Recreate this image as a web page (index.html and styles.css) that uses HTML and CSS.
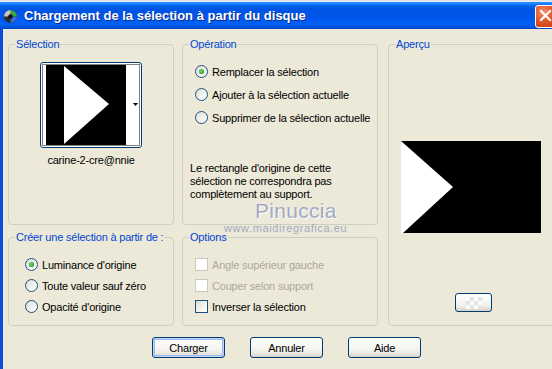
FILE: index.html
```html
<!DOCTYPE html>
<html lang="fr">
<head>
  <meta charset="UTF-8">
  <title>Chargement de la sélection à partir du disque</title>
  <link rel="stylesheet" href="styles.css">
</head>
<body>
  <div id="window">
    <div class="titlebar">
      <svg class="app-icon" width="15" height="15" viewBox="0 0 15 15">
        <circle cx="7.5" cy="7.5" r="6.5" fill="#2b2b2b"/>
        <path d="M7.5 1 A6.5 6.5 0 0 1 14 7.5 L7.5 7.5 Z" fill="#3aa83a"/>
        <path d="M7.5 7.5 L14 7.5 A6.5 6.5 0 0 1 7.5 14 Z" fill="#2f6fd6"/>
        <path d="M1 7.5 A6.5 6.5 0 0 1 7.5 1 L7.5 7.5 Z" fill="#c8c8c8"/>
        <circle cx="7.5" cy="7.5" r="2.3" fill="#111"/>
      </svg>
      <span class="title">Chargement de la sélection à partir du disque</span>
      <span class="close-btn">
        <svg width="21" height="21" viewBox="0 0 21 21">
          <path d="M6 6 L15 15 M15 6 L6 15" stroke="#fff" stroke-width="2.2" stroke-linecap="square"/>
        </svg>
      </span>
    </div>

    <div class="content">
      <div class="groups">
        <fieldset class="group">
          <legend>Sélection</legend>
          <div class="sel-body">
            <div class="thumb">
              <svg width="102" height="86" viewBox="0 0 102 86">
                <rect x="6" y="3" width="80" height="80" fill="#000"/>
                <polygon points="24,4 69,42 24,82" fill="#fff"/>
                <rect x="86" y="3" width="13" height="80" fill="#fff"/>
                <polygon points="93,41 98,41 95.5,44" fill="#000"/>
                <rect x="2.5" y="2.5" width="97" height="81" fill="none" stroke="#000" stroke-width="1" stroke-dasharray="1 1"/>
              </svg>
            </div>
            <div class="thumb-name">carine-2-cre@nnie</div>
          </div>
        </fieldset>

        <fieldset class="group">
          <legend>Opération</legend>
          <div class="op-body">
            <div class="choices op-choices">
              <label class="choice"><span class="radio checked"></span>Remplacer la sélection</label>
              <label class="choice"><span class="radio"></span>Ajouter à la sélection actuelle</label>
              <label class="choice"><span class="radio"></span>Supprimer de la sélection actuelle</label>
            </div>
            <p class="note">Le rectangle d'origine de cette<br>sélection ne correspondra pas<br>complètement au support.</p>
          </div>
        </fieldset>

        <fieldset class="group preview-group">
          <legend>Aperçu</legend>
          <div class="preview-body">
            <svg class="preview" width="140" height="92" viewBox="0 0 140 92">
              <rect width="140" height="92" fill="#000"/>
              <polygon points="0,0 52,46 2,92 0,92" fill="#fff"/>
            </svg>
            <span class="zoom-btn"><span class="checker"></span></span>
          </div>
        </fieldset>

        <fieldset class="group">
          <legend>Créer une sélection à partir de :</legend>
          <div class="choices src-choices">
            <label class="choice"><span class="radio checked"></span>Luminance d'origine</label>
            <label class="choice"><span class="radio"></span>Toute valeur sauf zéro</label>
            <label class="choice"><span class="radio"></span>Opacité d'origine</label>
          </div>
        </fieldset>

        <fieldset class="group">
          <legend>Options</legend>
          <div class="choices opt-choices">
            <label class="choice disabled"><span class="check"></span>Angle supérieur gauche</label>
            <label class="choice disabled"><span class="check"></span>Couper selon support</label>
            <label class="choice"><span class="check"></span>Inverser la sélection</label>
          </div>
        </fieldset>
      </div>

      <div class="actions">
        <button class="btn default">Charger</button>
        <button class="btn">Annuler</button>
        <button class="btn">Aide</button>
      </div>

      <div class="watermark">
        <span class="wm-name">Pinuccia</span>
        <span class="wm-url">www.maidiregrafica.eu</span>
      </div>
    </div>
  </div>
</body>
</html>
```

FILE: styles.css
```css
html, body {
  margin: 0;
  padding: 0;
  width: 552px;
  height: 369px;
  overflow: hidden;
  background-color: #ECE9D8;
  font-family: "Liberation Sans", Arial, sans-serif;
  font-size: 11px;
  color: #000;
}

#window {
  display: flex;
  flex-direction: column;
  height: 100%;
}

.titlebar {
  display: flex;
  align-items: center;
  height: 27px;
  border-top: 2px solid #e3e5ea;
  padding-left: 3px;
  overflow: hidden;
  background: linear-gradient(to bottom, #3593ff 0%, #127dff 8%, #0262ee 14%, #0057e5 22%, #0054e3 30%, #0055eb 56%, #005bf5 68%, #0262f0 82%, #0055de 92%, #0045c0 100%);
}

.app-icon {
  flex-shrink: 0;
  margin-top: 1px;
}

.title {
  margin-left: 6px;
  color: #fff;
  font-size: 13px;
  font-weight: bold;
  text-shadow: 1px 1px 0 #0a2a8a;
  white-space: nowrap;
}

.close-btn {
  flex-shrink: 0;
  margin-left: auto;
  margin-right: -6px;
  margin-top: 2px;
  width: 21px;
  height: 21px;
  border: 1px solid #fff;
  border-radius: 3px;
  background: radial-gradient(circle at 35% 30%, #f0926b 0%, #e2562b 45%, #c23a12 100%);
}

.close-btn svg {
  display: block;
  margin: -1px;
}

.content {
  position: relative;
  flex: 1;
  border-left: 3px solid #0a4ce0;
  padding: 9px 0 0 5px;
  overflow: hidden;
  letter-spacing: -0.2px;
}

.groups {
  display: grid;
  grid-template-columns: 166px 196px 180px;
  grid-template-rows: 187px 95px;
  column-gap: 8px;
  row-gap: 6px;
}

.group {
  margin: 0;
  padding: 0;
  min-width: 0;
  border: 1px solid #d0d0bf;
  border-radius: 4px;
  box-sizing: border-box;
}

.group legend {
  margin-left: 6px;
  padding: 0 1px;
  line-height: 12px;
  color: #0046d5;
}

.preview-group {
  grid-column: 3;
  grid-row: 1 / span 2;
  margin-left: 2px;
}

/* Sélection */
.thumb {
  width: 100px;
  height: 84px;
  margin: 12px auto 0;
  border: 1px solid #003c74;
  border-radius: 3px;
  background: #fff;
  overflow: hidden;
}

.thumb svg {
  display: block;
  margin: -1px;
}

.thumb-name {
  margin-top: 6px;
  text-align: center;
  line-height: 13px;
}

/* radios & cases */
.choices {
  display: flex;
  flex-direction: column;
}

.op-body {
  padding: 15px 0 0 7px;
}

.op-choices {
  gap: 10px;
  padding-left: 5px;
}

.src-choices {
  gap: 8px;
  padding: 15px 0 0 16px;
}

.opt-choices {
  gap: 8px;
  padding: 15px 0 0 12px;
}

.choice {
  display: flex;
  align-items: center;
  gap: 4px;
  height: 13px;
  white-space: nowrap;
}

.choice.disabled {
  color: #aca899;
}

.radio {
  flex-shrink: 0;
  position: relative;
  width: 11px;
  height: 11px;
  border: 1px solid #1c5180;
  border-radius: 50%;
  background: linear-gradient(135deg, #dcdcd7 0%, #f4f4f0 60%, #fff 100%);
}

.radio.checked::after {
  content: "";
  position: absolute;
  left: 3px;
  top: 3px;
  width: 5px;
  height: 5px;
  border-radius: 50%;
  background: radial-gradient(circle at 40% 40%, #6fe06f 0%, #2aa82a 60%, #1e8b1e 100%);
}

.check {
  flex-shrink: 0;
  width: 11px;
  height: 11px;
  border: 1px solid #1c5180;
  background: linear-gradient(135deg, #dcdcd7 0%, #f4f4f0 60%, #fff 100%);
}

.disabled .check {
  border-color: #cac8bb;
  background: #fff;
}

.note {
  margin: 38px 0 0;
  line-height: 13px;
}

/* Aperçu */
.preview-body {
  padding-left: 12px;
}

.preview {
  display: block;
  margin-top: 91px;
}

.zoom-btn {
  display: flex;
  align-items: center;
  justify-content: center;
  width: 35px;
  height: 17px;
  margin: 60px 0 0 54px;
  border: 1px solid #003c74;
  border-radius: 3px;
  background: linear-gradient(to bottom, #fff 0%, #f0f0ea 70%, #d6d0c5 100%);
}

.checker {
  width: 16px;
  height: 12px;
  background: repeating-conic-gradient(#e4e4e4 0% 25%, #fbfbfb 0% 50%) 0 0 / 8px 8px;
}

/* boutons */
.actions {
  display: flex;
  gap: 25px;
  margin-top: 11px;
  padding-left: 144px;
}

.btn {
  width: 73px;
  height: 21px;
  padding: 0;
  border: 1px solid #003c74;
  border-radius: 3px;
  background: linear-gradient(to bottom, #fff 0%, #f3f3ef 60%, #e6e4dc 85%, #d6d0c5 100%);
  font-family: "Liberation Sans", Arial, sans-serif;
  font-size: 11px;
  letter-spacing: -0.2px;
  color: #000;
}

.btn.default {
  box-shadow: inset 0 0 0 1px #c4d6f8, inset 0 0 0 2px #9bb8ee;
}

/* filigrane */
.watermark {
  position: absolute;
  left: 221px;
  top: 171px;
  display: flex;
  flex-direction: column;
  align-items: flex-start;
  pointer-events: none;
  letter-spacing: 0;
}

.wm-name {
  margin-left: 31px;
  font-size: 21px;
  line-height: 22px;
  letter-spacing: 0.3px;
  color: #a2a8c4;
  text-shadow: 1px 1px 0 #fff;
}

.wm-url {
  margin-top: 1px;
  font-size: 11px;
  line-height: 11px;
  letter-spacing: 0.6px;
  color: #a2a8c4;
}
```
